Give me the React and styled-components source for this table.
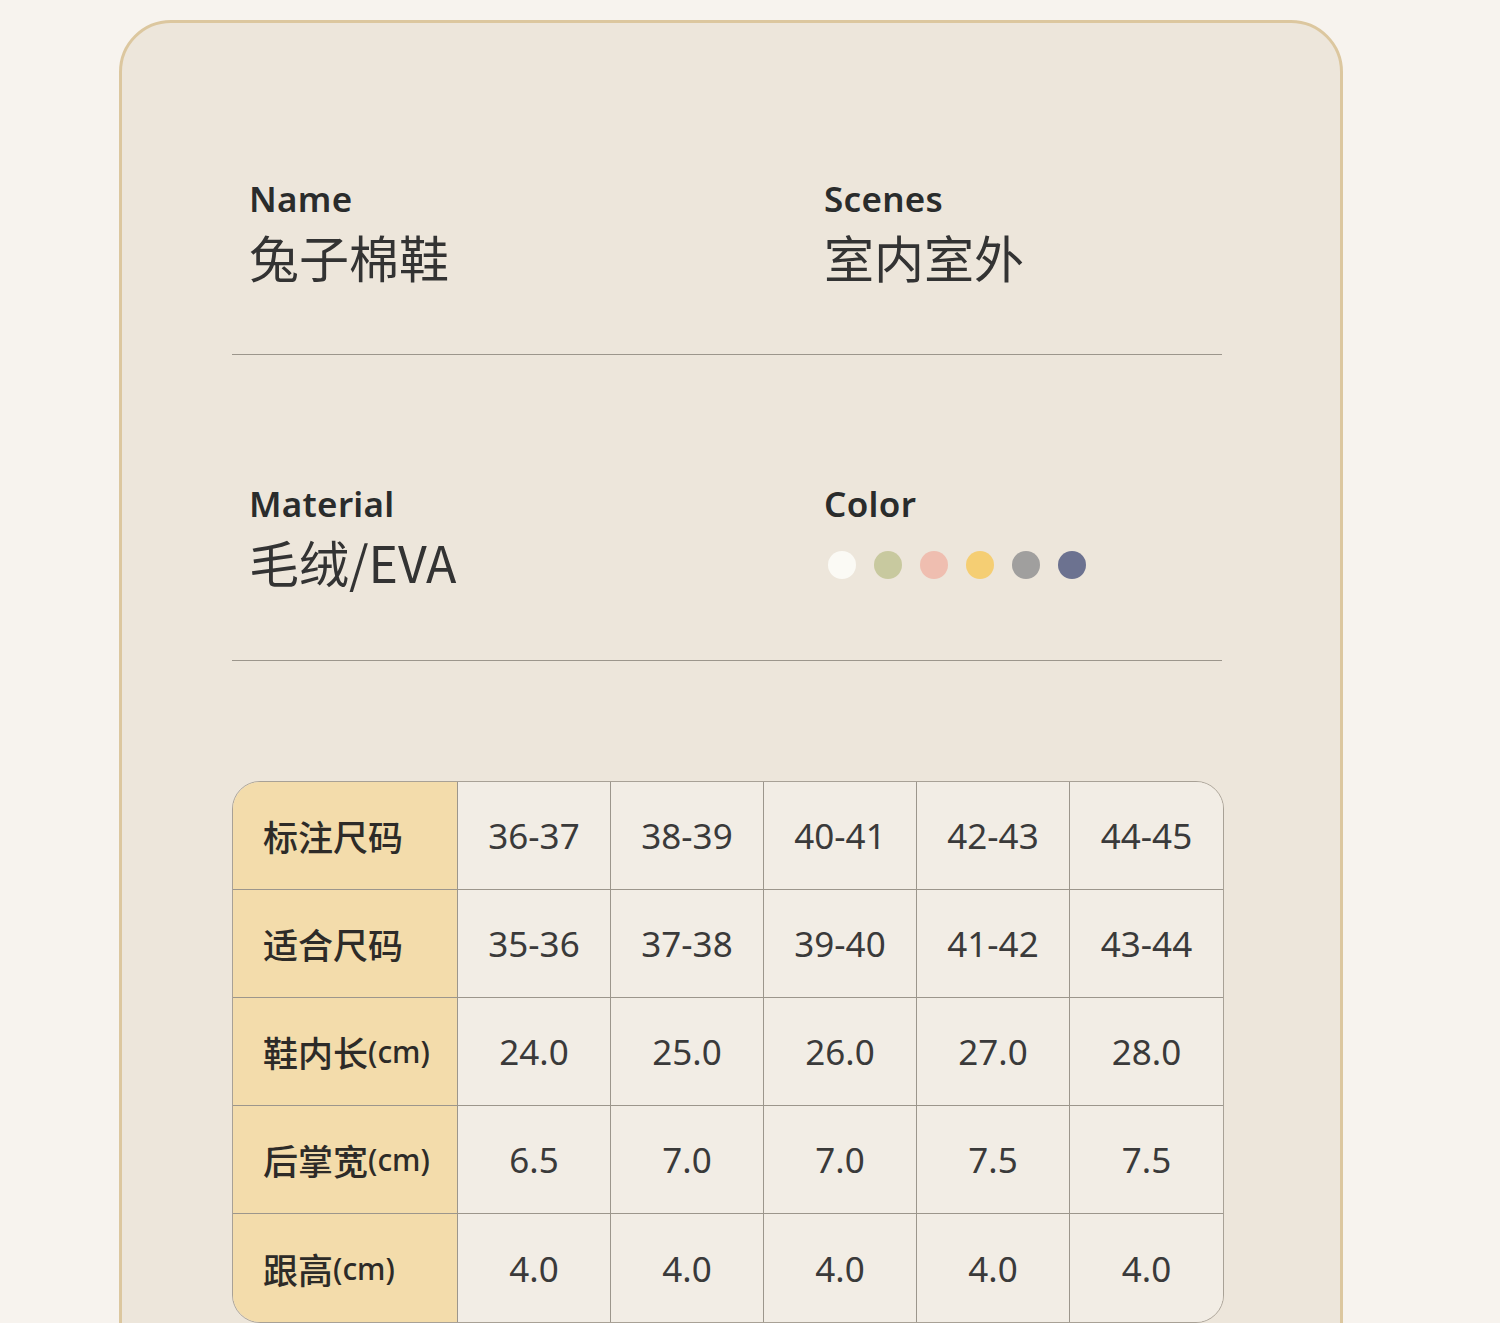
import React from 'react';
import styled, { createGlobalStyle } from 'styled-components';

const GlobalStyle = createGlobalStyle`
  html, body {
    margin: 0;
    padding: 0;
    background: #f7f3ee;
  }
  body {
    font-family: "Noto Sans", "Noto Sans CJK SC", sans-serif;
    color: #2f2f2f;
  }
`;

const Page = styled.div`
  height: 1323px;
  overflow: hidden;
  padding-top: 20px;
  box-sizing: border-box;
`;

const Card = styled.div`
  margin-left: 119px;
  width: 1224px;
  height: 1400px;
  box-sizing: border-box;
  border: 3px solid #dcc79f;
  border-radius: 52px;
  background: #ede6db;
  padding: 0 118px 0 110px;
`;

const Section = styled.div`
  display: grid;
  grid-template-columns: 575px 1fr;
  padding: ${p => p.top}px 0 0 17px;
  height: ${p => p.height}px;
  box-sizing: border-box;
  border-bottom: 1.5px solid #9c968c;
`;

const Field = styled.div`
  display: flex;
  flex-direction: column;
`;

const Label = styled.div`
  font-size: 35px;
  font-weight: 600;
  line-height: 46px;
  color: #2a2c2c;
  letter-spacing: 0.3px;
`;

const Value = styled.div`
  font-family: "Noto Sans CJK SC", sans-serif;
  font-size: 50px;
  font-weight: 400;
  line-height: 68px;
  color: #333;
`;

const Dots = styled.div`
  display: flex;
  gap: 18px;
  margin-top: 24px;
  padding-left: 4px;
`;

const Dot = styled.span`
  width: 28px;
  height: 28px;
  border-radius: 50%;
  background: ${p => p.c};
`;

const Table = styled.div`
  margin-top: 120px;
  display: grid;
  grid-template-columns: 225px repeat(5, 1fr);
  grid-auto-rows: 108px;
  border: 1.5px solid #a8a196;
  border-radius: 28px;
  overflow: hidden;
  width: 992px;
  box-sizing: border-box;
`;

const Cell = styled.div`
  display: flex;
  align-items: center;
  justify-content: ${p => (p.head ? 'flex-start' : 'center')};
  padding-left: ${p => (p.head ? '30px' : '0')};
  background: ${p => (p.head ? '#f3dcab' : '#f2ede5')};
  border-right: ${p => (p.lastCol ? 'none' : '1.5px solid #9c968c')};
  border-bottom: ${p => (p.lastRow ? 'none' : '1.5px solid #9c968c')};
  font-family: "Noto Sans", "Noto Sans CJK SC", sans-serif;
  font-size: 35px;
  font-weight: ${p => (p.head ? 500 : 400)};
  color: ${p => (p.head ? '#2d2b28' : '#3a3a3a')};
  white-space: nowrap;
`;

const Unit = styled.span`
  font-size: 30px;
  font-weight: 500;
`;

const colors = ['#fbfaf5', '#c8c99f', '#efbeb0', '#f5ce73', '#a09f9e', '#6c7290'];

const rows = [
  { name: '标注尺码', vals: ['36-37', '38-39', '40-41', '42-43', '44-45'] },
  { name: '适合尺码', vals: ['35-36', '37-38', '39-40', '41-42', '43-44'] },
  { name: '鞋内长', unit: '(cm)', vals: ['24.0', '25.0', '26.0', '27.0', '28.0'] },
  { name: '后掌宽', unit: '(cm)', vals: ['6.5', '7.0', '7.0', '7.5', '7.5'] },
  { name: '跟高', unit: '(cm)', vals: ['4.0', '4.0', '4.0', '4.0', '4.0'] },
];

export default function App() {
  return (
    <Page>
      <GlobalStyle />
      <Card>
        <Section top={153} height={332}>
          <Field>
            <Label>Name</Label>
            <Value>兔子棉鞋</Value>
          </Field>
          <Field>
            <Label>Scenes</Label>
            <Value>室内室外</Value>
          </Field>
        </Section>
        <Section top={126} height={306}>
          <Field>
            <Label>Material</Label>
            <Value>毛绒/EVA</Value>
          </Field>
          <Field>
            <Label>Color</Label>
            <Dots>
              {colors.map(c => <Dot key={c} c={c} />)}
            </Dots>
          </Field>
        </Section>
        <Table>
          {rows.map((r, i) => (
            <React.Fragment key={r.name}>
              <Cell head lastRow={i === rows.length - 1}>
                {r.name}
                {r.unit && <Unit>{r.unit}</Unit>}
              </Cell>
              {r.vals.map((v, j) => (
                <Cell key={j} lastCol={j === 4} lastRow={i === rows.length - 1}>{v}</Cell>
              ))}
            </React.Fragment>
          ))}
        </Table>
      </Card>
    </Page>
  );
}
